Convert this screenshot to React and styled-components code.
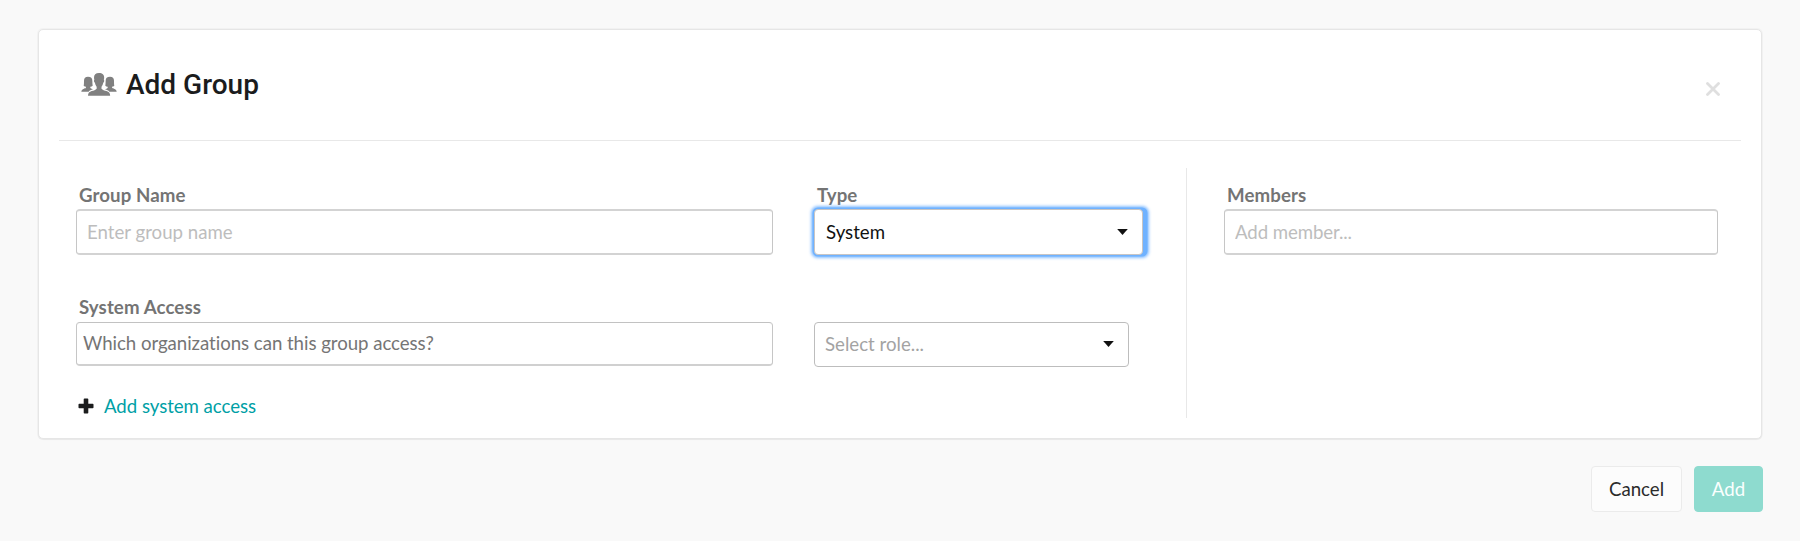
import React from "react";
import styled, { createGlobalStyle } from "styled-components";

const GlobalStyle = createGlobalStyle`
  *, *::before, *::after { box-sizing: border-box; }
  body {
    margin: 0;
    background: #f9f9f9;
    color: #1b1c1d;
    font-family: Lato, "Liberation Sans", sans-serif;
    font-size: 18.67px;
    line-height: 24px;
    font-variant-ligatures: none;
  }
  input, button { font: inherit; font-variant-ligatures: none; }
`;

const Page = styled.main`
  padding: 29px 37px 0 38px;
`;

const Card = styled.section`
  height: 410px;
  margin-right: 1px;
  background: #fff;
  border: 1px solid #e6e6e6;
  border-radius: 5px;
  box-shadow: 0 0 1px 1px rgba(0, 0, 0, 0.03), 0 1px 1px rgba(0, 0, 0, 0.04);
`;

const Header = styled.header`
  display: flex;
  align-items: center;
  height: 111px;
  margin: 0 20px;
  padding: 0 21px 1px 22px;
  border-bottom: 1px solid #e8e8e8;
`;

const Title = styled.h1`
  flex: 1;
  margin: 0 0 0 9px;
  font: 500 28px/36px Roboto, sans-serif;
`;

const CloseButton = styled.button`
  display: flex;
  margin-top: 8px;
  padding: 0;
  border: 0;
  background: none;
`;

const Body = styled.div`
  display: flex;
  padding: 27px 43px 0 37px;
`;

const MainColumn = styled.div`
  width: 1111px;
  height: 250px;
  padding-top: 15px;
  border-right: 1px solid #e8e8e8;
`;

const MembersColumn = styled.div`
  flex: 1;
  padding: 15px 0 0 37px;
`;

const Row = styled.div`
  display: flex;
  align-items: flex-end;
  gap: 41px;
  margin-top: ${(p) => p.$top || 0}px;
`;

const Field = styled.div`
  display: flex;
  flex-direction: column;
  width: ${(p) => (p.$width ? `${p.$width}px` : "auto")};
`;

const Label = styled.label`
  margin-bottom: 2px;
  padding-left: 3px;
  color: #747474;
  font-weight: 700;
  letter-spacing: 0.1px;
`;

const TextInput = styled.input`
  width: 100%;
  height: 46px;
  padding: 0 10px;
  background: #fff;
  border: solid;
  border-width: 2px 1px;
  border-color: #d3d3d3 #c6c6c6;
  border-radius: 4px;
  outline: 0;
  letter-spacing: ${(p) => p.$spacing || 0}px;
  &::placeholder { color: #bdbdbd; opacity: 1; }
`;

const OrganizationInput = styled(TextInput)`
  height: 44px;
  margin: 1px 0;
  padding: 0 6px 2px;
  border-width: 1px 1px 2px;
  border-color: #c2c2c2 #c6c6c6 #d0d0d0;
  &::placeholder { color: #757575; }
`;

const Select = styled.div`
  display: flex;
  align-items: center;
  justify-content: space-between;
  width: ${(p) => p.$width}px;
  height: ${(p) => p.$height}px;
  padding: 0 14px ${(p) => (p.$empty ? "1px 10px" : "0 11px")};
  color: ${(p) => (p.$empty ? "#a3a3a3" : "#111")};
  background: #fff;
  border: 1px solid ${(p) => (p.$empty ? "#bdbdbd" : "#c8c5c4")};
  border-radius: 4px;
`;

const FocusRing = styled.div`
  width: 332px;
  background: #6fb2ff;
  border-radius: 4px;
  box-shadow: 0 0 0 1.5px #6fb2ff, 0 0 3px 2.5px rgba(111, 178, 255, 0.8);
`;

const AddAccess = styled.a`
  display: flex;
  align-items: center;
  gap: 10px;
  margin-top: 27px;
  padding-left: 2px;
  color: #009fa6;
  letter-spacing: -0.05px;
`;

const Actions = styled.footer`
  display: flex;
  justify-content: flex-end;
  gap: 12px;
  margin-top: 27px;
`;

const Button = styled.button`
  width: ${(p) => p.$width}px;
  height: 46px;
  padding: 0 0 1px;
  color: ${(p) => (p.$primary ? "#fafffe" : "#2b2b2b")};
  background: ${(p) => (p.$primary ? "#8edbcf" : "#fcfcfc")};
  border: 1px solid ${(p) => (p.$primary ? "#8edbcf" : "#ebebeb")};
  border-radius: 4px;
`;

const UsersSvg = styled.svg`
  margin-bottom: 2px;
`;

const UsersIcon = () => (
  <UsersSvg width="36" height="24" viewBox="0 0 108 72" fill="#808080" aria-hidden="true">
    <path d="M54 3c10 0 16 5 15.500 15l-1 6c1.500 1 1.500 4 0 6l-2 3c-1 5-2.500 8-5 11v6c3 4 9 5 15 7 7 2 11 6 11 14H21c0-8 4-12 11-14 6-2 12-3 15-7v-6c-2.500-3-4-6-5-11l-2-3c-1.500-2-1.500-5 0-6l-1-6c-.5-10 5-15 15-15Z" />
    <path id="side" d="M21 14c9 0 13 4 13 12 0 5 .5 10 1 15-2 2-4 3-7 3v4c2 2 5 3 8 4-6 2-10 3-13 7H1c0-5 3-7 8-9 3-1 6-1 6-4v-2c-3 0-5-1-7-3 1-4 1-10 1-15 0-8 4-12 12-12Z" />
    <use href="#side" transform="translate(108 0) scale(-1 1)" />
  </UsersSvg>
);

const CloseIcon = () => (
  <svg width="14" height="14" viewBox="0 0 14 14" stroke="#dfdfdf" strokeWidth="2.8" strokeLinecap="round">
    <path d="M1.500 1.500l11 11M12.500 1.500l-11 11" />
  </svg>
);

const Caret = () => (
  <svg width="11" height="6" viewBox="0 0 11 6" fill="#111">
    <path d="M.2 0h10.600L5.500 6Z" />
  </svg>
);

const PlusIcon = () => (
  <svg width="16" height="16" viewBox="0 0 16 16" fill="#1b1c1d">
    <path d="M6.500.5h3a.8.8 0 0 1 .8.800v4.400h4.400a.8.8 0 0 1 .8.800v3a.8.8 0 0 1-.8.800h-4.400v4.400a.8.8 0 0 1-.8.800h-3a.8.8 0 0 1-.8-.8v-4.400H1.300a.8.8 0 0 1-.8-.8v-3a.8.8 0 0 1 .8-.8h4.400V1.300a.8.8 0 0 1 .8-.8Z" />
  </svg>
);

export default function App() {
  return (
    <>
      <GlobalStyle />
      <Page>
        <Card>
          <Header>
            <UsersIcon />
            <Title>Add Group</Title>
            <CloseButton aria-label="Close"><CloseIcon /></CloseButton>
          </Header>
          <Body>
            <MainColumn>
              <Row>
                <Field $width={697}>
                  <Label htmlFor="name">Group Name</Label>
                  <TextInput id="name" placeholder="Enter group name" />
                </Field>
                <Field>
                  <Label>Type</Label>
                  <FocusRing>
                    <Select $width={329} $height={46}>System<Caret /></Select>
                  </FocusRing>
                </Field>
              </Row>
              <Row $top={40}>
                <Field $width={697}>
                  <Label htmlFor="access">System Access</Label>
                  <OrganizationInput id="access" $spacing={-0.05} placeholder="Which organizations can this group access?" />
                </Field>
                <Select $width={315} $height={45} $empty>Select role...<Caret /></Select>
              </Row>
              <AddAccess><PlusIcon />Add system access</AddAccess>
            </MainColumn>
            <MembersColumn>
              <Field>
                <Label htmlFor="members">Members</Label>
                <TextInput id="members" $spacing={-0.1} placeholder="Add member..." />
              </Field>
            </MembersColumn>
          </Body>
        </Card>
        <Actions>
          <Button $width={91}>Cancel</Button>
          <Button $width={69} $primary>Add</Button>
        </Actions>
      </Page>
    </>
  );
}
